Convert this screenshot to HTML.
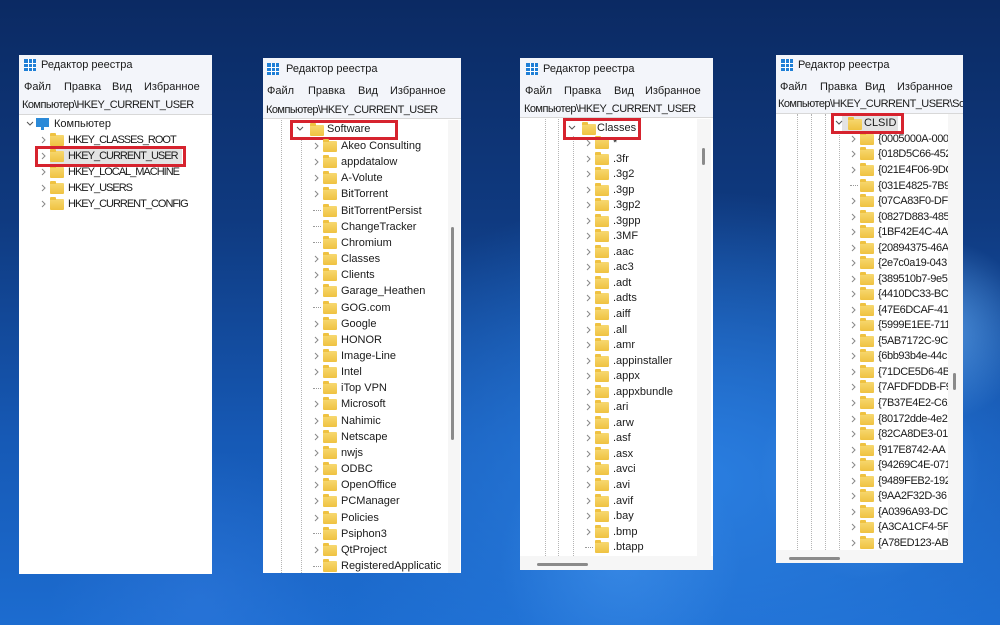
<!DOCTYPE html>
<html><head><meta charset="utf-8"><style>
*{margin:0;padding:0;box-sizing:border-box}
body{width:1000px;height:625px;overflow:hidden;position:relative;font-family:"Liberation Sans","DejaVu Sans",sans-serif;color:#1a1a1a;
background:
radial-gradient(circle at 940px 330px,rgba(120,190,255,.55) 0,rgba(120,190,255,0) 90px),
radial-gradient(circle at 870px 470px,rgba(90,170,250,.45) 0,rgba(90,170,250,0) 110px),
radial-gradient(circle at 620px 560px,rgba(80,160,245,.4) 0,rgba(80,160,245,0) 120px),
radial-gradient(circle at 200px 600px,rgba(60,130,230,.35) 0,rgba(60,130,230,0) 150px),
radial-gradient(ellipse at 700px 480px,#2a7ee0 0,rgba(30,100,210,0) 420px),
linear-gradient(180deg,#0b2a63 0%,#0f3a80 35%,#1659b5 70%,#1c6cd0 100%);}
.p{position:absolute;background:#fff;overflow:hidden}
.hd{position:absolute;left:0;right:0;top:0;background:#f3f5fa;border-bottom:1px solid #d8d8d8}
.t{position:absolute;font-size:11px;white-space:nowrap;line-height:14px}
.ad{letter-spacing:-0.55px}
.u{letter-spacing:-1px}
.ico{position:absolute;width:12px;height:12px;background:
linear-gradient(#fff,#fff) 4px 0/1px 12px no-repeat,linear-gradient(#fff,#fff) 8px 0/1px 12px no-repeat,
linear-gradient(#fff,#fff) 0 4px/12px 1px no-repeat,linear-gradient(#fff,#fff) 0 8px/12px 1px no-repeat,#1f7fd6}
.tree{position:absolute;overflow:hidden}
.r{display:flex;align-items:center;white-space:nowrap;font-size:11px}
.ch{width:8px;height:10px;flex:none}
.lf{width:8px;height:1px;flex:none;border-top:1px dotted #999}
.f{width:14px;height:11px;flex:none;margin-left:2px;background:linear-gradient(#f7d870,#efc241);border-radius:1px;position:relative;margin-top:1px}
.f:before{content:"";position:absolute;left:0;top:-2px;width:6px;height:3px;background:#efc241;border-radius:1px 1px 0 0}
.x{margin-left:4px}
.vl{position:absolute;width:0;border-left:1px dotted #b5b5b5}
.rb{position:absolute;border:3px solid #d6232e}
.th{position:absolute;background:#8a8a8a;border-radius:2px}
.c4 .x{letter-spacing:-0.4px}
</style></head><body>

<!-- Panel 1 -->
<div class="p" style="left:19px;top:55px;width:193px;height:519px">
 <div class="hd" style="height:60px"></div>
</div>
<div class="ico" style="left:24px;top:59px"></div>
<div class="t" style="left:41px;top:58px">Редактор реестра</div>
<div class="t" style="left:24px;top:80px">Файл</div><div class="t" style="left:64px;top:80px">Правка</div><div class="t" style="left:112px;top:80px">Вид</div><div class="t" style="left:144px;top:80px">Избранное</div>
<div class="t ad" style="left:22px;top:98px">Компьютер\HKEY_CURRENT_USER</div>
<svg style="position:absolute;left:26px;top:120px" width="8" height="8"><path d="M1 2 L4 5 L7 2" stroke="#555" fill="none"/></svg>
<div style="position:absolute;left:36px;top:118px;width:13px;height:9px;background:#2b8ad8"></div>
<div style="position:absolute;left:41px;top:127px;width:3px;height:3px;background:#2b8ad8"></div>
<div class="t" style="left:54px;top:117px">Компьютер</div>
<div style="position:absolute;left:50px;top:148px;width:132px;height:16px;background:#e3e3e3"></div>
<div class="tree" style="left:40px;top:132px;width:170px;height:84px">
 <div class="r" style="height:16px"><svg class="ch" viewBox="0 0 8 10"><path d="M2 2L5 5L2 8" stroke="#888" fill="none"/></svg><span class="f"></span><span class="x u">HKEY_CLASSES_ROOT</span></div>
 <div class="r" style="height:16px"><svg class="ch" viewBox="0 0 8 10"><path d="M2 2L5 5L2 8" stroke="#888" fill="none"/></svg><span class="f"></span><span class="x u">HKEY_CURRENT_USER</span></div>
 <div class="r" style="height:16px"><svg class="ch" viewBox="0 0 8 10"><path d="M2 2L5 5L2 8" stroke="#888" fill="none"/></svg><span class="f"></span><span class="x u">HKEY_LOCAL_MACHINE</span></div>
 <div class="r" style="height:16px"><svg class="ch" viewBox="0 0 8 10"><path d="M2 2L5 5L2 8" stroke="#888" fill="none"/></svg><span class="f"></span><span class="x u">HKEY_USERS</span></div>
 <div class="r" style="height:16px"><svg class="ch" viewBox="0 0 8 10"><path d="M2 2L5 5L2 8" stroke="#888" fill="none"/></svg><span class="f"></span><span class="x u">HKEY_CURRENT_CONFIG</span></div>
</div>
<div class="rb" style="left:35px;top:146px;width:151px;height:21px"></div>

<!-- Panel 2 -->
<div class="p" style="left:263px;top:58px;width:198px;height:515px">
 <div class="hd" style="height:61px"></div>
</div>
<div class="ico" style="left:267px;top:63px"></div>
<div class="t" style="left:286px;top:62px">Редактор реестра</div>
<div class="t" style="left:267px;top:84px">Файл</div><div class="t" style="left:308px;top:84px">Правка</div><div class="t" style="left:358px;top:84px">Вид</div><div class="t" style="left:390px;top:84px">Избранное</div>
<div class="t ad" style="left:266px;top:103px">Компьютер\HKEY_CURRENT_USER</div>
<div class="vl" style="left:281px;top:120px;height:453px"></div>
<div class="vl" style="left:301px;top:137px;height:436px"></div>
<svg style="position:absolute;left:296px;top:125px" width="8" height="8"><path d="M1 2 L4 5 L7 2" stroke="#555" fill="none"/></svg>
<span class="f" style="position:absolute;left:308px;top:124px"></span>
<div class="t" style="left:327px;top:122px">Software</div>
<div class="rb" style="left:290px;top:120px;width:108px;height:20px"></div>
<div class="tree" style="left:313px;top:137.9px;width:136px;height:435px">
 <div class="r" style="height:16.17px"><svg class="ch" viewBox="0 0 8 10"><path d="M2 2L5 5L2 8" stroke="#888" fill="none"/></svg><span class="f"></span><span class="x">Akeo Consulting</span></div>
 <div class="r" style="height:16.17px"><svg class="ch" viewBox="0 0 8 10"><path d="M2 2L5 5L2 8" stroke="#888" fill="none"/></svg><span class="f"></span><span class="x">appdatalow</span></div>
 <div class="r" style="height:16.17px"><svg class="ch" viewBox="0 0 8 10"><path d="M2 2L5 5L2 8" stroke="#888" fill="none"/></svg><span class="f"></span><span class="x">A-Volute</span></div>
 <div class="r" style="height:16.17px"><svg class="ch" viewBox="0 0 8 10"><path d="M2 2L5 5L2 8" stroke="#888" fill="none"/></svg><span class="f"></span><span class="x">BitTorrent</span></div>
 <div class="r" style="height:16.17px"><span class="lf"></span><span class="f"></span><span class="x">BitTorrentPersist</span></div>
 <div class="r" style="height:16.17px"><span class="lf"></span><span class="f"></span><span class="x">ChangeTracker</span></div>
 <div class="r" style="height:16.17px"><span class="lf"></span><span class="f"></span><span class="x">Chromium</span></div>
 <div class="r" style="height:16.17px"><svg class="ch" viewBox="0 0 8 10"><path d="M2 2L5 5L2 8" stroke="#888" fill="none"/></svg><span class="f"></span><span class="x">Classes</span></div>
 <div class="r" style="height:16.17px"><svg class="ch" viewBox="0 0 8 10"><path d="M2 2L5 5L2 8" stroke="#888" fill="none"/></svg><span class="f"></span><span class="x">Clients</span></div>
 <div class="r" style="height:16.17px"><svg class="ch" viewBox="0 0 8 10"><path d="M2 2L5 5L2 8" stroke="#888" fill="none"/></svg><span class="f"></span><span class="x">Garage_Heathen</span></div>
 <div class="r" style="height:16.17px"><span class="lf"></span><span class="f"></span><span class="x">GOG.com</span></div>
 <div class="r" style="height:16.17px"><svg class="ch" viewBox="0 0 8 10"><path d="M2 2L5 5L2 8" stroke="#888" fill="none"/></svg><span class="f"></span><span class="x">Google</span></div>
 <div class="r" style="height:16.17px"><svg class="ch" viewBox="0 0 8 10"><path d="M2 2L5 5L2 8" stroke="#888" fill="none"/></svg><span class="f"></span><span class="x">HONOR</span></div>
 <div class="r" style="height:16.17px"><svg class="ch" viewBox="0 0 8 10"><path d="M2 2L5 5L2 8" stroke="#888" fill="none"/></svg><span class="f"></span><span class="x">Image-Line</span></div>
 <div class="r" style="height:16.17px"><svg class="ch" viewBox="0 0 8 10"><path d="M2 2L5 5L2 8" stroke="#888" fill="none"/></svg><span class="f"></span><span class="x">Intel</span></div>
 <div class="r" style="height:16.17px"><span class="lf"></span><span class="f"></span><span class="x">iTop VPN</span></div>
 <div class="r" style="height:16.17px"><svg class="ch" viewBox="0 0 8 10"><path d="M2 2L5 5L2 8" stroke="#888" fill="none"/></svg><span class="f"></span><span class="x">Microsoft</span></div>
 <div class="r" style="height:16.17px"><svg class="ch" viewBox="0 0 8 10"><path d="M2 2L5 5L2 8" stroke="#888" fill="none"/></svg><span class="f"></span><span class="x">Nahimic</span></div>
 <div class="r" style="height:16.17px"><svg class="ch" viewBox="0 0 8 10"><path d="M2 2L5 5L2 8" stroke="#888" fill="none"/></svg><span class="f"></span><span class="x">Netscape</span></div>
 <div class="r" style="height:16.17px"><svg class="ch" viewBox="0 0 8 10"><path d="M2 2L5 5L2 8" stroke="#888" fill="none"/></svg><span class="f"></span><span class="x">nwjs</span></div>
 <div class="r" style="height:16.17px"><svg class="ch" viewBox="0 0 8 10"><path d="M2 2L5 5L2 8" stroke="#888" fill="none"/></svg><span class="f"></span><span class="x">ODBC</span></div>
 <div class="r" style="height:16.17px"><svg class="ch" viewBox="0 0 8 10"><path d="M2 2L5 5L2 8" stroke="#888" fill="none"/></svg><span class="f"></span><span class="x">OpenOffice</span></div>
 <div class="r" style="height:16.17px"><svg class="ch" viewBox="0 0 8 10"><path d="M2 2L5 5L2 8" stroke="#888" fill="none"/></svg><span class="f"></span><span class="x">PCManager</span></div>
 <div class="r" style="height:16.17px"><svg class="ch" viewBox="0 0 8 10"><path d="M2 2L5 5L2 8" stroke="#888" fill="none"/></svg><span class="f"></span><span class="x">Policies</span></div>
 <div class="r" style="height:16.17px"><span class="lf"></span><span class="f"></span><span class="x">Psiphon3</span></div>
 <div class="r" style="height:16.17px"><svg class="ch" viewBox="0 0 8 10"><path d="M2 2L5 5L2 8" stroke="#888" fill="none"/></svg><span class="f"></span><span class="x">QtProject</span></div>
 <div class="r" style="height:16.17px"><span class="lf"></span><span class="f"></span><span class="x">RegisteredApplicatic</span></div>
</div>
<div style="position:absolute;left:448px;top:120px;width:12px;height:453px;background:#f6f6f6"></div>
<div class="th" style="left:451px;top:227px;width:3px;height:213px"></div>

<!-- Panel 3 -->
<div class="p" style="left:520px;top:58px;width:193px;height:512px">
 <div class="hd" style="height:60px"></div>
</div>
<div class="ico" style="left:526px;top:63px"></div>
<div class="t" style="left:543px;top:62px">Редактор реестра</div>
<div class="t" style="left:525px;top:84px">Файл</div><div class="t" style="left:564px;top:84px">Правка</div><div class="t" style="left:614px;top:84px">Вид</div><div class="t" style="left:645px;top:84px">Избранное</div>
<div class="t ad" style="left:524px;top:102px">Компьютер\HKEY_CURRENT_USER</div>
<div class="vl" style="left:545px;top:119px;height:437px"></div>
<div class="vl" style="left:558px;top:119px;height:437px"></div>
<div class="vl" style="left:573px;top:136px;height:420px"></div>
<svg style="position:absolute;left:568px;top:124px" width="8" height="8"><path d="M1 2 L4 5 L7 2" stroke="#555" fill="none"/></svg>
<span class="f" style="position:absolute;left:580px;top:123px"></span>
<div class="t" style="left:597px;top:121px">Classes</div>
<div class="tree" style="left:585px;top:135.2px;width:112px;height:421px">
 <div class="r" style="height:15.56px"><svg class="ch" viewBox="0 0 8 10"><path d="M2 2L5 5L2 8" stroke="#888" fill="none"/></svg><span class="f"></span><span class="x">*</span></div>
 <div class="r" style="height:15.56px"><svg class="ch" viewBox="0 0 8 10"><path d="M2 2L5 5L2 8" stroke="#888" fill="none"/></svg><span class="f"></span><span class="x">.3fr</span></div>
 <div class="r" style="height:15.56px"><svg class="ch" viewBox="0 0 8 10"><path d="M2 2L5 5L2 8" stroke="#888" fill="none"/></svg><span class="f"></span><span class="x">.3g2</span></div>
 <div class="r" style="height:15.56px"><svg class="ch" viewBox="0 0 8 10"><path d="M2 2L5 5L2 8" stroke="#888" fill="none"/></svg><span class="f"></span><span class="x">.3gp</span></div>
 <div class="r" style="height:15.56px"><svg class="ch" viewBox="0 0 8 10"><path d="M2 2L5 5L2 8" stroke="#888" fill="none"/></svg><span class="f"></span><span class="x">.3gp2</span></div>
 <div class="r" style="height:15.56px"><svg class="ch" viewBox="0 0 8 10"><path d="M2 2L5 5L2 8" stroke="#888" fill="none"/></svg><span class="f"></span><span class="x">.3gpp</span></div>
 <div class="r" style="height:15.56px"><svg class="ch" viewBox="0 0 8 10"><path d="M2 2L5 5L2 8" stroke="#888" fill="none"/></svg><span class="f"></span><span class="x">.3MF</span></div>
 <div class="r" style="height:15.56px"><svg class="ch" viewBox="0 0 8 10"><path d="M2 2L5 5L2 8" stroke="#888" fill="none"/></svg><span class="f"></span><span class="x">.aac</span></div>
 <div class="r" style="height:15.56px"><svg class="ch" viewBox="0 0 8 10"><path d="M2 2L5 5L2 8" stroke="#888" fill="none"/></svg><span class="f"></span><span class="x">.ac3</span></div>
 <div class="r" style="height:15.56px"><svg class="ch" viewBox="0 0 8 10"><path d="M2 2L5 5L2 8" stroke="#888" fill="none"/></svg><span class="f"></span><span class="x">.adt</span></div>
 <div class="r" style="height:15.56px"><svg class="ch" viewBox="0 0 8 10"><path d="M2 2L5 5L2 8" stroke="#888" fill="none"/></svg><span class="f"></span><span class="x">.adts</span></div>
 <div class="r" style="height:15.56px"><svg class="ch" viewBox="0 0 8 10"><path d="M2 2L5 5L2 8" stroke="#888" fill="none"/></svg><span class="f"></span><span class="x">.aiff</span></div>
 <div class="r" style="height:15.56px"><svg class="ch" viewBox="0 0 8 10"><path d="M2 2L5 5L2 8" stroke="#888" fill="none"/></svg><span class="f"></span><span class="x">.all</span></div>
 <div class="r" style="height:15.56px"><svg class="ch" viewBox="0 0 8 10"><path d="M2 2L5 5L2 8" stroke="#888" fill="none"/></svg><span class="f"></span><span class="x">.amr</span></div>
 <div class="r" style="height:15.56px"><svg class="ch" viewBox="0 0 8 10"><path d="M2 2L5 5L2 8" stroke="#888" fill="none"/></svg><span class="f"></span><span class="x">.appinstaller</span></div>
 <div class="r" style="height:15.56px"><svg class="ch" viewBox="0 0 8 10"><path d="M2 2L5 5L2 8" stroke="#888" fill="none"/></svg><span class="f"></span><span class="x">.appx</span></div>
 <div class="r" style="height:15.56px"><svg class="ch" viewBox="0 0 8 10"><path d="M2 2L5 5L2 8" stroke="#888" fill="none"/></svg><span class="f"></span><span class="x">.appxbundle</span></div>
 <div class="r" style="height:15.56px"><svg class="ch" viewBox="0 0 8 10"><path d="M2 2L5 5L2 8" stroke="#888" fill="none"/></svg><span class="f"></span><span class="x">.ari</span></div>
 <div class="r" style="height:15.56px"><svg class="ch" viewBox="0 0 8 10"><path d="M2 2L5 5L2 8" stroke="#888" fill="none"/></svg><span class="f"></span><span class="x">.arw</span></div>
 <div class="r" style="height:15.56px"><svg class="ch" viewBox="0 0 8 10"><path d="M2 2L5 5L2 8" stroke="#888" fill="none"/></svg><span class="f"></span><span class="x">.asf</span></div>
 <div class="r" style="height:15.56px"><svg class="ch" viewBox="0 0 8 10"><path d="M2 2L5 5L2 8" stroke="#888" fill="none"/></svg><span class="f"></span><span class="x">.asx</span></div>
 <div class="r" style="height:15.56px"><svg class="ch" viewBox="0 0 8 10"><path d="M2 2L5 5L2 8" stroke="#888" fill="none"/></svg><span class="f"></span><span class="x">.avci</span></div>
 <div class="r" style="height:15.56px"><svg class="ch" viewBox="0 0 8 10"><path d="M2 2L5 5L2 8" stroke="#888" fill="none"/></svg><span class="f"></span><span class="x">.avi</span></div>
 <div class="r" style="height:15.56px"><svg class="ch" viewBox="0 0 8 10"><path d="M2 2L5 5L2 8" stroke="#888" fill="none"/></svg><span class="f"></span><span class="x">.avif</span></div>
 <div class="r" style="height:15.56px"><svg class="ch" viewBox="0 0 8 10"><path d="M2 2L5 5L2 8" stroke="#888" fill="none"/></svg><span class="f"></span><span class="x">.bay</span></div>
 <div class="r" style="height:15.56px"><svg class="ch" viewBox="0 0 8 10"><path d="M2 2L5 5L2 8" stroke="#888" fill="none"/></svg><span class="f"></span><span class="x">.bmp</span></div>
 <div class="r" style="height:15.56px"><span class="lf"></span><span class="f"></span><span class="x">.btapp</span></div>
</div>
<div class="rb" style="left:563px;top:118px;width:78px;height:22px"></div>
<div style="position:absolute;left:697px;top:119px;width:14px;height:437px;background:#f6f6f6"></div>
<div class="th" style="left:702px;top:148px;width:3px;height:17px"></div>
<div style="position:absolute;left:520px;top:556px;width:193px;height:14px;background:#f6f6f6"></div>
<div class="th" style="left:537px;top:563px;width:51px;height:3px"></div>

<!-- Panel 4 -->
<div class="p" style="left:776px;top:55px;width:187px;height:508px">
 <div class="hd" style="height:59px"></div>
</div>
<div class="ico" style="left:781px;top:59px"></div>
<div class="t" style="left:798px;top:58px">Редактор реестра</div>
<div class="t" style="left:780px;top:80px">Файл</div><div class="t" style="left:820px;top:80px">Правка</div><div class="t" style="left:865px;top:80px">Вид</div><div class="t" style="left:897px;top:80px">Избранное</div>
<div class="t ad" style="left:778px;top:97px;width:185px;overflow:hidden">Компьютер\HKEY_CURRENT_USER\Software</div>
<div class="vl" style="left:797px;top:114px;height:436px"></div>
<div class="vl" style="left:811px;top:114px;height:436px"></div>
<div class="vl" style="left:825px;top:114px;height:436px"></div>
<div class="vl" style="left:839px;top:131px;height:419px"></div>
<div style="position:absolute;left:842px;top:115px;width:56px;height:16px;background:#e3e3e3"></div>
<svg style="position:absolute;left:835px;top:119px" width="8" height="8"><path d="M1 2 L4 5 L7 2" stroke="#555" fill="none"/></svg>
<span class="f" style="position:absolute;left:846px;top:118px"></span>
<div class="t" style="left:864px;top:116px">CLSID</div>
<div class="tree c4" style="left:850px;top:131.2px;width:98px;height:419px">
 <div class="r" style="height:15.54px"><svg class="ch" viewBox="0 0 8 10"><path d="M2 2L5 5L2 8" stroke="#888" fill="none"/></svg><span class="f"></span><span class="x">{0005000A-000</span></div>
 <div class="r" style="height:15.54px"><svg class="ch" viewBox="0 0 8 10"><path d="M2 2L5 5L2 8" stroke="#888" fill="none"/></svg><span class="f"></span><span class="x">{018D5C66-452</span></div>
 <div class="r" style="height:15.54px"><svg class="ch" viewBox="0 0 8 10"><path d="M2 2L5 5L2 8" stroke="#888" fill="none"/></svg><span class="f"></span><span class="x">{021E4F06-9DC</span></div>
 <div class="r" style="height:15.54px"><span class="lf"></span><span class="f"></span><span class="x">{031E4825-7B9</span></div>
 <div class="r" style="height:15.54px"><svg class="ch" viewBox="0 0 8 10"><path d="M2 2L5 5L2 8" stroke="#888" fill="none"/></svg><span class="f"></span><span class="x">{07CA83F0-DF0</span></div>
 <div class="r" style="height:15.54px"><svg class="ch" viewBox="0 0 8 10"><path d="M2 2L5 5L2 8" stroke="#888" fill="none"/></svg><span class="f"></span><span class="x">{0827D883-485</span></div>
 <div class="r" style="height:15.54px"><svg class="ch" viewBox="0 0 8 10"><path d="M2 2L5 5L2 8" stroke="#888" fill="none"/></svg><span class="f"></span><span class="x">{1BF42E4C-4AF</span></div>
 <div class="r" style="height:15.54px"><svg class="ch" viewBox="0 0 8 10"><path d="M2 2L5 5L2 8" stroke="#888" fill="none"/></svg><span class="f"></span><span class="x">{20894375-46A</span></div>
 <div class="r" style="height:15.54px"><svg class="ch" viewBox="0 0 8 10"><path d="M2 2L5 5L2 8" stroke="#888" fill="none"/></svg><span class="f"></span><span class="x">{2e7c0a19-043</span></div>
 <div class="r" style="height:15.54px"><svg class="ch" viewBox="0 0 8 10"><path d="M2 2L5 5L2 8" stroke="#888" fill="none"/></svg><span class="f"></span><span class="x">{389510b7-9e5</span></div>
 <div class="r" style="height:15.54px"><svg class="ch" viewBox="0 0 8 10"><path d="M2 2L5 5L2 8" stroke="#888" fill="none"/></svg><span class="f"></span><span class="x">{4410DC33-BC</span></div>
 <div class="r" style="height:15.54px"><svg class="ch" viewBox="0 0 8 10"><path d="M2 2L5 5L2 8" stroke="#888" fill="none"/></svg><span class="f"></span><span class="x">{47E6DCAF-41</span></div>
 <div class="r" style="height:15.54px"><svg class="ch" viewBox="0 0 8 10"><path d="M2 2L5 5L2 8" stroke="#888" fill="none"/></svg><span class="f"></span><span class="x">{5999E1EE-711</span></div>
 <div class="r" style="height:15.54px"><svg class="ch" viewBox="0 0 8 10"><path d="M2 2L5 5L2 8" stroke="#888" fill="none"/></svg><span class="f"></span><span class="x">{5AB7172C-9C</span></div>
 <div class="r" style="height:15.54px"><svg class="ch" viewBox="0 0 8 10"><path d="M2 2L5 5L2 8" stroke="#888" fill="none"/></svg><span class="f"></span><span class="x">{6bb93b4e-44c</span></div>
 <div class="r" style="height:15.54px"><svg class="ch" viewBox="0 0 8 10"><path d="M2 2L5 5L2 8" stroke="#888" fill="none"/></svg><span class="f"></span><span class="x">{71DCE5D6-4B</span></div>
 <div class="r" style="height:15.54px"><svg class="ch" viewBox="0 0 8 10"><path d="M2 2L5 5L2 8" stroke="#888" fill="none"/></svg><span class="f"></span><span class="x">{7AFDFDDB-F9</span></div>
 <div class="r" style="height:15.54px"><svg class="ch" viewBox="0 0 8 10"><path d="M2 2L5 5L2 8" stroke="#888" fill="none"/></svg><span class="f"></span><span class="x">{7B37E4E2-C62</span></div>
 <div class="r" style="height:15.54px"><svg class="ch" viewBox="0 0 8 10"><path d="M2 2L5 5L2 8" stroke="#888" fill="none"/></svg><span class="f"></span><span class="x">{80172dde-4e2</span></div>
 <div class="r" style="height:15.54px"><svg class="ch" viewBox="0 0 8 10"><path d="M2 2L5 5L2 8" stroke="#888" fill="none"/></svg><span class="f"></span><span class="x">{82CA8DE3-01</span></div>
 <div class="r" style="height:15.54px"><svg class="ch" viewBox="0 0 8 10"><path d="M2 2L5 5L2 8" stroke="#888" fill="none"/></svg><span class="f"></span><span class="x">{917E8742-AA</span></div>
 <div class="r" style="height:15.54px"><svg class="ch" viewBox="0 0 8 10"><path d="M2 2L5 5L2 8" stroke="#888" fill="none"/></svg><span class="f"></span><span class="x">{94269C4E-071</span></div>
 <div class="r" style="height:15.54px"><svg class="ch" viewBox="0 0 8 10"><path d="M2 2L5 5L2 8" stroke="#888" fill="none"/></svg><span class="f"></span><span class="x">{9489FEB2-192</span></div>
 <div class="r" style="height:15.54px"><svg class="ch" viewBox="0 0 8 10"><path d="M2 2L5 5L2 8" stroke="#888" fill="none"/></svg><span class="f"></span><span class="x">{9AA2F32D-36</span></div>
 <div class="r" style="height:15.54px"><svg class="ch" viewBox="0 0 8 10"><path d="M2 2L5 5L2 8" stroke="#888" fill="none"/></svg><span class="f"></span><span class="x">{A0396A93-DC</span></div>
 <div class="r" style="height:15.54px"><svg class="ch" viewBox="0 0 8 10"><path d="M2 2L5 5L2 8" stroke="#888" fill="none"/></svg><span class="f"></span><span class="x">{A3CA1CF4-5F</span></div>
 <div class="r" style="height:15.54px"><svg class="ch" viewBox="0 0 8 10"><path d="M2 2L5 5L2 8" stroke="#888" fill="none"/></svg><span class="f"></span><span class="x">{A78ED123-AB</span></div>
</div>
<div class="rb" style="left:831px;top:113px;width:73px;height:21px"></div>
<div style="position:absolute;left:948px;top:114px;width:15px;height:436px;background:#f6f6f6"></div>
<div class="th" style="left:953px;top:373px;width:3px;height:17px"></div>
<div style="position:absolute;left:776px;top:550px;width:187px;height:13px;background:#f6f6f6"></div>
<div class="th" style="left:789px;top:557px;width:51px;height:3px"></div>

</body></html>
